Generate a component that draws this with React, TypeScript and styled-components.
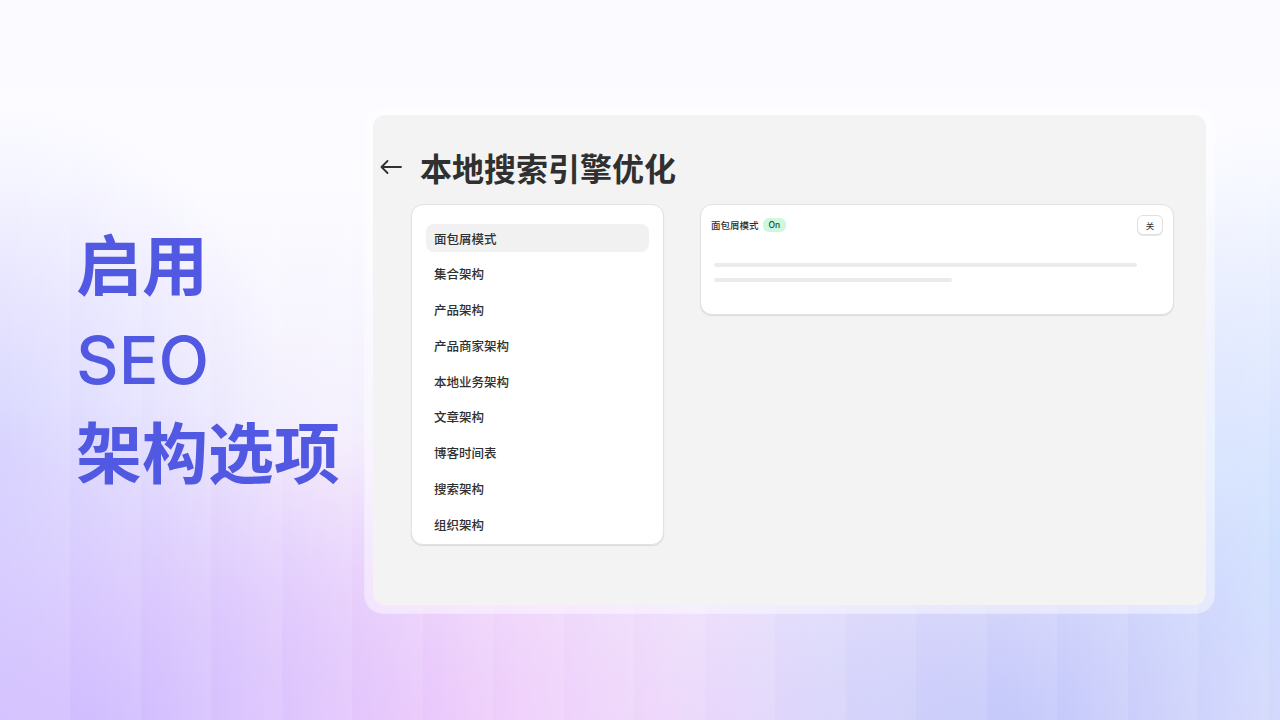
import styled, { createGlobalStyle } from 'styled-components';

const GlobalStyle = createGlobalStyle`
  html, body {
    margin: 0;
    padding: 0;
  }
  body {
    font-family: "Inter", "Noto Sans CJK SC", sans-serif;
    color: #303030;
  }
`;

const Page = styled.div`
  position: relative;
  width: 1280px;
  height: 720px;
  overflow: hidden;
  display: flex;
  align-items: center;
  background:
    repeating-linear-gradient(
      90deg,
      rgba(255, 255, 255, 0) 0px,
      rgba(255, 255, 255, 0.1) 70px,
      rgba(255, 255, 255, 0) 70.5px
    ),
    radial-gradient(ellipse 420px 320px at 8% 100%, rgba(206, 186, 255, 0.95), rgba(206, 186, 255, 0) 100%),
    radial-gradient(ellipse 420px 300px at 32% 100%, rgba(242, 200, 250, 0.9), rgba(242, 200, 250, 0) 100%),
    radial-gradient(ellipse 360px 280px at 80% 100%, rgba(192, 198, 250, 0.95), rgba(192, 198, 250, 0) 100%),
    radial-gradient(ellipse 300px 420px at 100% 75%, rgba(206, 224, 255, 0.95), rgba(206, 224, 255, 0) 100%),
    radial-gradient(ellipse 300px 340px at 0% 62%, rgba(214, 212, 255, 0.9), rgba(214, 212, 255, 0) 100%),
    linear-gradient(180deg, #fbfaff 0%, #fcfcff 25%, #f3effd 60%, #eadffb 100%);
`;

const Intro = styled.div`
  width: 365px;
  padding-left: 76px;
  box-sizing: border-box;
  display: flex;
  flex-direction: column;
`;

const Headline = styled.div<{ $latin?: boolean }>`
  font-family: "Inter", "Noto Sans CJK SC", sans-serif;
  font-size: 66px;
  font-weight: ${(p) => (p.$latin ? 500 : 700)};
  line-height: 94px;
  color: #5159e2;
  white-space: nowrap;
`;

const Frame = styled.div`
  width: 849px;
  height: 506px;
  padding: 8px;
  box-sizing: border-box;
  border-radius: 18px;
  background: rgba(255, 255, 255, 0.45);
  box-shadow: 0 0 0 1px rgba(255, 255, 255, 0.35);
`;

const Panel = styled.div`
  height: 100%;
  border-radius: 12px;
  background: #f3f3f3;
  display: flex;
  flex-direction: column;
`;

const Header = styled.div`
  display: flex;
  align-items: center;
  gap: 18px;
  padding: 36px 0 0 7px;
  height: 32px;
`;

const Title = styled.h1`
  margin: 0;
  font-family: "Noto Sans CJK SC", sans-serif;
  font-size: 32px;
  line-height: 32px;
  font-weight: 700;
  color: #303030;
`;

const Body = styled.div`
  display: flex;
  align-items: flex-start;
  gap: 36px;
  padding: 21px 32px 0 38px;
`;

const Card = styled.div`
  background: #ffffff;
  border: 1px solid #e2e2e2;
  border-radius: 12px;
  box-shadow: 0 1px 1px rgba(0, 0, 0, 0.1);
  box-sizing: border-box;
`;

const NavCard = styled(Card)`
  width: 253px;
  padding: 19px 14px 6px;
  display: flex;
  flex-direction: column;
  gap: 7.8px;
`;

const NavItem = styled.div<{ $active?: boolean }>`
  height: 28px;
  display: flex;
  align-items: center;
  padding-left: 8px;
  border-radius: 8px;
  background: ${(p) => (p.$active ? '#f1f1f1' : 'transparent')};
  font-family: "Noto Sans CJK SC", sans-serif;
  font-size: 12.5px;
  font-weight: 500;
  color: #303030;
`;

const DetailCard = styled(Card)`
  flex: 1;
  height: 111px;
  padding: 10px;
`;

const DetailHeader = styled.div`
  display: flex;
  align-items: center;
  justify-content: space-between;
  height: 20px;
`;

const DetailTitle = styled.div`
  display: flex;
  align-items: center;
  gap: 4px;
  font-family: "Noto Sans CJK SC", sans-serif;
  font-size: 9.5px;
  font-weight: 500;
  color: #303030;
`;

const Badge = styled.span`
  display: inline-flex;
  align-items: center;
  height: 14px;
  padding: 0 6px;
  border-radius: 6px;
  background: #cdf7df;
  color: #0c5132;
  font-family: "Inter", sans-serif;
  font-size: 8.5px;
  font-weight: 500;
`;

const OffButton = styled.button`
  width: 26px;
  height: 20px;
  padding: 0;
  border: 1px solid #e0e0e0;
  border-radius: 6px;
  background: #ffffff;
  box-shadow: 0 1px 0 rgba(0, 0, 0, 0.1);
  font-family: "Noto Sans CJK SC", sans-serif;
  font-size: 8.5px;
  color: #303030;
`;

const Skeleton = styled.div`
  display: flex;
  flex-direction: column;
  gap: 11px;
  padding: 28px 26px 0 3px;
`;

const Bar = styled.div<{ $width?: string }>`
  height: 4px;
  width: ${(p) => p.$width ?? '100%'};
  border-radius: 2px;
  background: #ebebeb;
`;

const BackArrow = () => (
  <svg width="22" height="14" viewBox="0 0 22 14" fill="none">
    <path d="M21 7H1.5M7.5 1L1.5 7L7.5 13" stroke="#303030" strokeWidth="1.8" strokeLinecap="round" strokeLinejoin="round" />
  </svg>
);

const schemas = [
  '面包屑模式',
  '集合架构',
  '产品架构',
  '产品商家架构',
  '本地业务架构',
  '文章架构',
  '博客时间表',
  '搜索架构',
  '组织架构',
];

export default function App() {
  return (
    <Page>
      <GlobalStyle />
      <Intro>
        <Headline>启用</Headline>
        <Headline $latin>SEO</Headline>
        <Headline>架构选项</Headline>
      </Intro>
      <Frame>
        <Panel>
          <Header>
            <BackArrow />
            <Title>本地搜索引擎优化</Title>
          </Header>
          <Body>
            <NavCard>
              {schemas.map((name, i) => (
                <NavItem key={name} $active={i === 0}>
                  {name}
                </NavItem>
              ))}
            </NavCard>
            <DetailCard>
              <DetailHeader>
                <DetailTitle>
                  面包屑模式
                  <Badge>On</Badge>
                </DetailTitle>
                <OffButton>关</OffButton>
              </DetailHeader>
              <Skeleton>
                <Bar />
                <Bar $width="238px" />
              </Skeleton>
            </DetailCard>
          </Body>
        </Panel>
      </Frame>
    </Page>
  );
}
